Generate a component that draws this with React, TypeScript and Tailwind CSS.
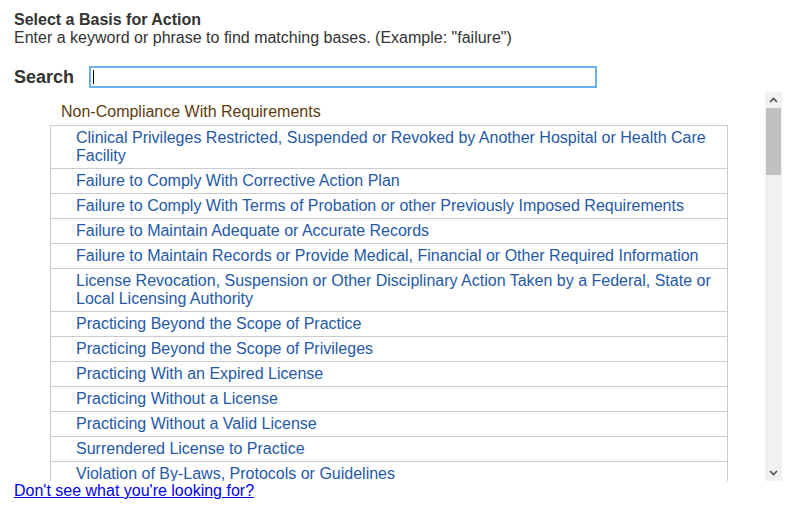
import React from "react";

const items: string[] = [
  "Clinical Privileges Restricted, Suspended or Revoked by Another Hospital or Health Care Facility",
  "Failure to Comply With Corrective Action Plan",
  "Failure to Comply With Terms of Probation or other Previously Imposed Requirements",
  "Failure to Maintain Adequate or Accurate Records",
  "Failure to Maintain Records or Provide Medical, Financial or Other Required Information",
  "License Revocation, Suspension or Other Disciplinary Action Taken by a Federal, State or Local Licensing Authority",
  "Practicing Beyond the Scope of Practice",
  "Practicing Beyond the Scope of Privileges",
  "Practicing With an Expired License",
  "Practicing Without a License",
  "Practicing Without a Valid License",
  "Surrendered License to Practice",
  "Violation of By-Laws, Protocols or Guidelines",
];

export default function App() {
  return (
    <div
      className="w-[796px] h-[510px] bg-white overflow-hidden text-[16px] leading-[18px] text-[#333]"
      style={{ fontFamily: '"Liberation Sans", Arial, sans-serif' }}
    >
      <div className="pl-[14px] pt-[11px]">
        <div className="font-bold">Select a Basis for Action</div>
        <div>Enter a keyword or phrase to find matching bases. (Example: "failure")</div>
      </div>
      <div className="flex items-center pl-[14px] mt-[18px] h-[24px]">
        <div className="font-bold text-[18px] leading-[20px] w-[75px]">Search</div>
        <div className="w-[508px] h-[22px] border-2 border-[#6cb0ea] flex items-center pl-[2px]">
          <div className="w-px h-[14px] bg-black" />
        </div>
      </div>
      <div className="flex ml-[50px] mt-[3px] h-[389px]">
        <div className="w-[715px] overflow-hidden">
          <div className="pl-[11px] pt-[11px] pb-[4px] text-[#5e3b0d]">Non-Compliance With Requirements</div>
          <div className="w-[678px] border-l border-r border-[#cccccc]">
            {items.map((t) => (
              <div
                key={t}
                className="border-t border-[#cccccc] pl-[25px] pr-[8px] py-[3px] text-[#2559a6]"
              >
                {t}
              </div>
            ))}
          </div>
        </div>
        <div className="w-[17px] bg-[#f1f1f1] flex flex-col">
          <div className="h-[16px] flex items-center justify-center">
            <svg width="9" height="6" viewBox="0 0 9 6">
              <path d="M1 5 L4.5 1.5 L8 5" fill="none" stroke="#505050" strokeWidth="1.6" />
            </svg>
          </div>
          <div className="mx-[1px] h-[67px] bg-[#c1c1c1]" />
          <div className="flex-1" />
          <div className="h-[17px] flex items-center justify-center">
            <svg width="9" height="6" viewBox="0 0 9 6">
              <path d="M1 1 L4.5 4.5 L8 1" fill="none" stroke="#505050" strokeWidth="1.6" />
            </svg>
          </div>
        </div>
      </div>
      <div className="pl-[14px] pt-[1px]">
        <a href="#" className="text-[#0000ee] underline">Don't see what you're looking for?</a>
      </div>
    </div>
  );
}
